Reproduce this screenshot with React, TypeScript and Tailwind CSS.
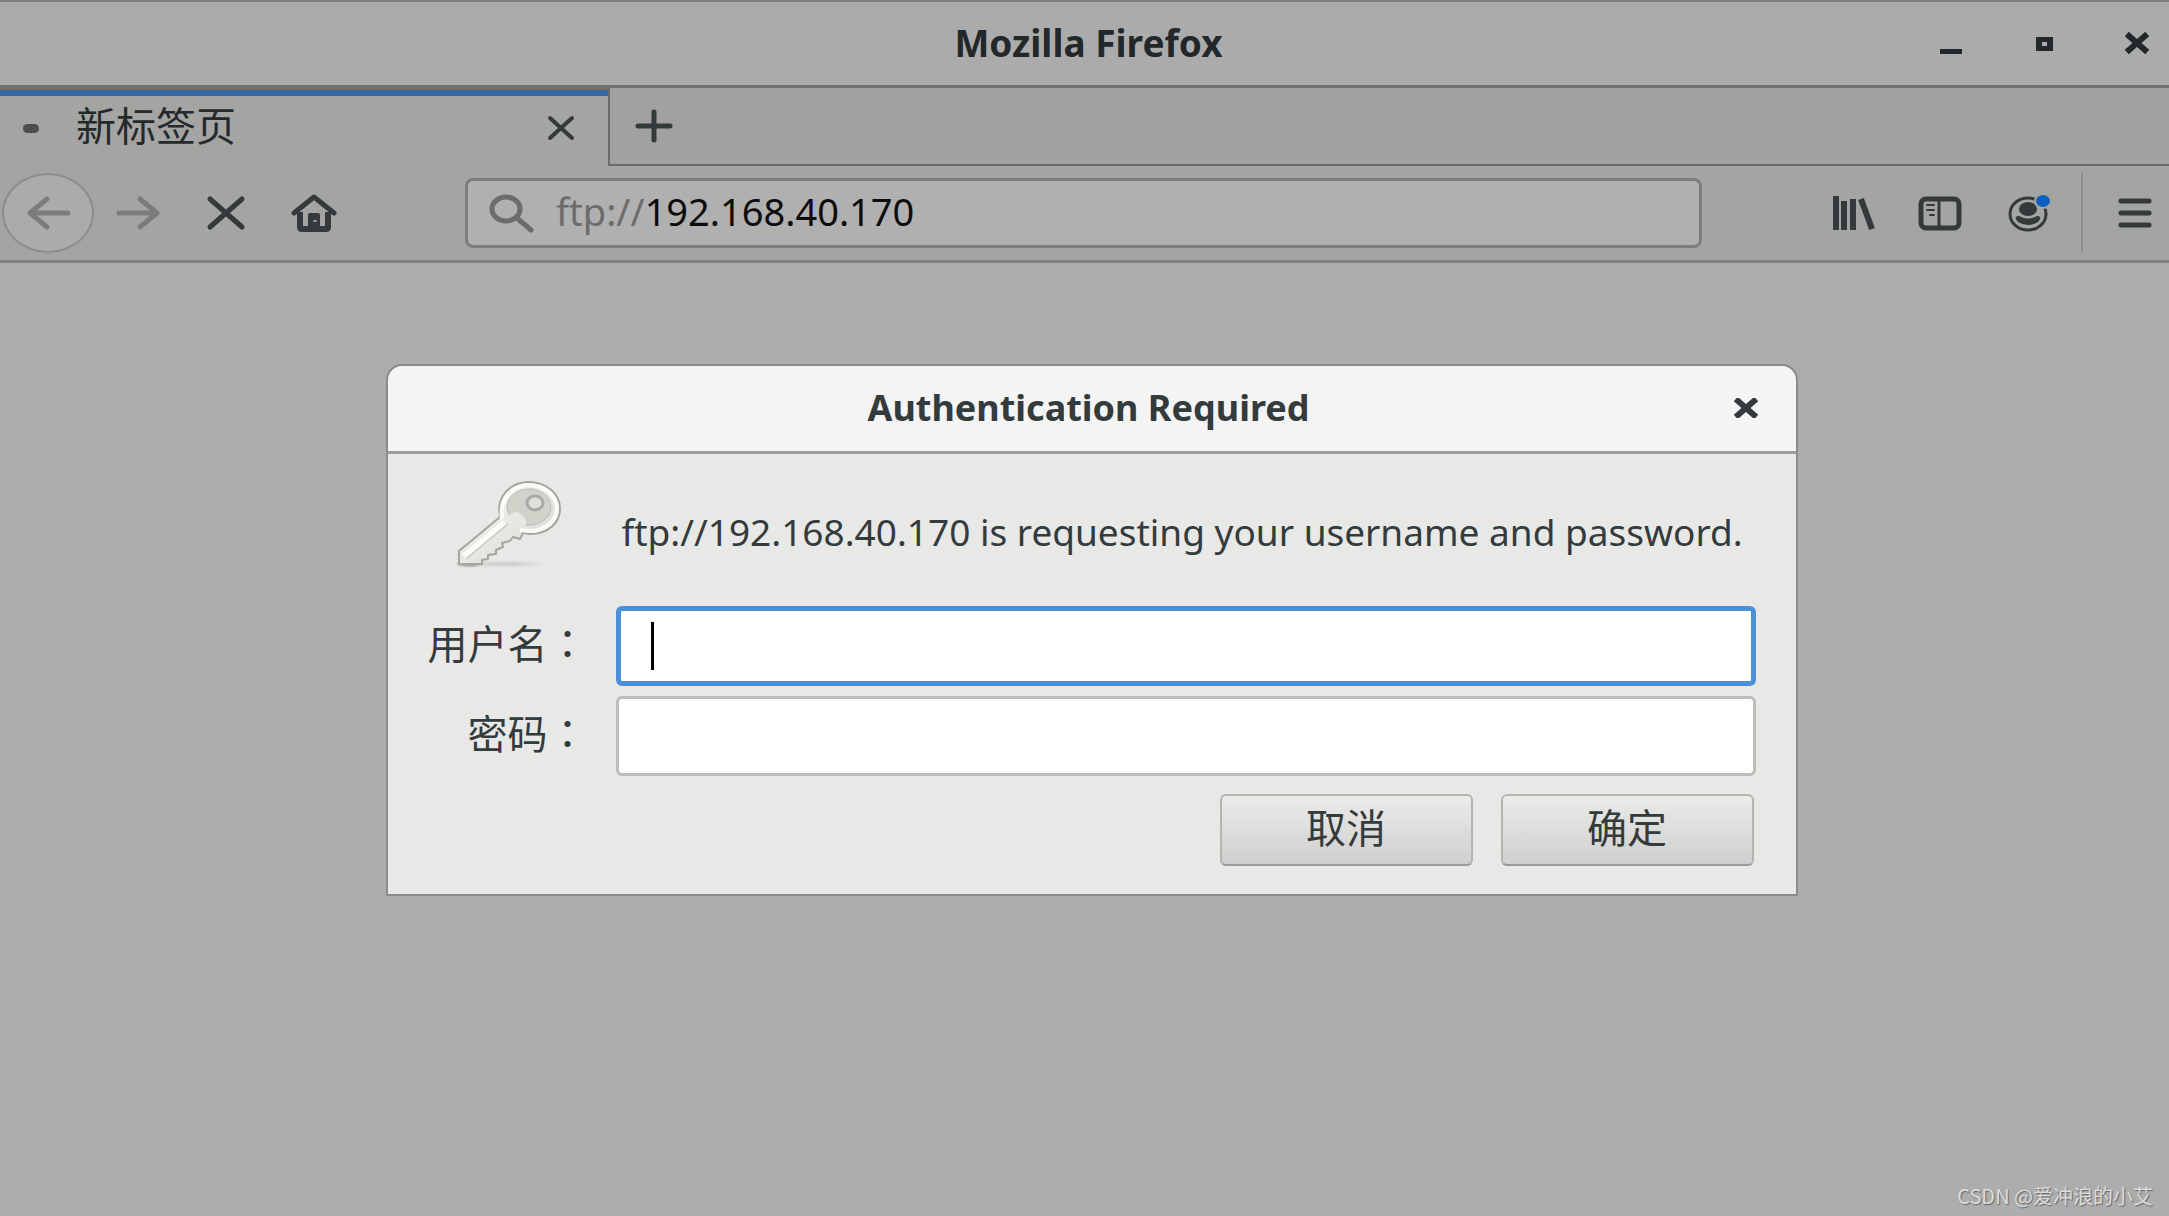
import React, { useState } from "react";

const iconColor = "#34393b";

const WindowControls: React.FC = () => (
    <div className="flex items-center gap-[29px] text-[#22282a]">
        <button type="button" aria-label="Minimize" className="flex h-16 w-16 items-center justify-center">
            <svg width="24" height="24" viewBox="0 0 24 24">
                <rect x="1" y="17" width="22" height="5" fill="currentColor" />
            </svg>
        </button>
        <button type="button" aria-label="Maximize" className="flex h-16 w-16 items-center justify-center">
            <svg width="24" height="24" viewBox="0 0 24 24">
                <path d="M4 5h17v14H4zM10 10v4h5v-4z" fill="currentColor" fillRule="evenodd" />
            </svg>
        </button>
        <button type="button" aria-label="Close" className="flex h-16 w-16 items-center justify-center">
            <svg width="24" height="24" viewBox="0 0 24 24">
                <path d="M4 4l16 14M20 4L4 18" stroke="currentColor" strokeWidth="6" strokeLinecap="square" />
            </svg>
        </button>
    </div>
);

const TabBar: React.FC = () => (
    <div className="flex h-[78px] items-stretch">
        <div className="flex w-[610px] border-t-2 border-r-2 border-t-[#70706b] border-r-[#6b6b6b]">
            <div className="flex flex-1 items-center border-t-[6px] border-[#3468a4] pr-8 pb-[6px] pl-[23px]">
                <span className="h-[9px] w-4 rounded-full bg-[#4a4e4f]" />
                <span className="ml-[37px] flex-1 pb-1 text-[40px] leading-[48px] text-[#24292b]">新标签页</span>
                <button type="button" aria-label="Close tab">
                    <svg width="30" height="26" viewBox="0 0 30 26" fill="none" stroke={iconColor} strokeWidth="4" strokeLinecap="round">
                        <path d="M4 3l22 20M26 3L4 23" />
                    </svg>
                </button>
            </div>
        </div>
        <div className="flex flex-1 items-center border-b-2 border-[#6b6b6b] bg-[#a1a1a1] pl-[25px]">
            <button type="button" aria-label="New tab">
                <svg width="38" height="34" viewBox="0 0 38 34" fill="none" stroke={iconColor} strokeWidth="5" strokeLinecap="round">
                    <path d="M3 17h32M19 3v28" />
                </svg>
            </button>
        </div>
    </div>
);

const NavButtons: React.FC = () => (
    <div className="flex items-center">
        <button type="button" aria-label="Back" className="flex h-20 w-[92px] items-center justify-center rounded-[50%] border-2 border-[#8d8d8c] bg-[#ababab]">
            <svg width="46" height="36" viewBox="0 0 46 36" fill="none" stroke="#7b7d7c" strokeWidth="5" strokeLinecap="round" strokeLinejoin="round">
                <path d="M43 18H5M22 4L5 18l17 14" />
            </svg>
        </button>
        <button type="button" aria-label="Forward" className="ml-[22px]">
            <svg width="46" height="36" viewBox="0 0 46 36" fill="none" stroke="#7b7d7c" strokeWidth="5" strokeLinecap="round" strokeLinejoin="round">
                <path d="M3 18h38M24 4l17 14-17 14" />
            </svg>
        </button>
        <button type="button" aria-label="Stop" className="ml-11">
            <svg width="40" height="36" viewBox="0 0 40 36" fill="none" stroke={iconColor} strokeWidth="5" strokeLinecap="round">
                <path d="M4 4l32 28M36 4L4 32" />
            </svg>
        </button>
        <button type="button" aria-label="Home" className="ml-[45px]">
            <svg width="46" height="40" viewBox="0 0 46 40" fill="none">
                <path d="M3 20L23 4l20 16" stroke={iconColor} strokeWidth="5" strokeLinecap="round" strokeLinejoin="round" />
                <path d="M9 19v15q0 2 2 2h24q2 0 2-2V19" stroke={iconColor} strokeWidth="6" strokeLinejoin="round" />
                <path d="M17 36V22q0-2 2-2h8q2 0 2 2v14z" fill={iconColor} />
                <ellipse cx="24" cy="28" rx="2" ry="1" fill="#a4a4a2" />
            </svg>
        </button>
    </div>
);

const UrlBar: React.FC = () => {
    const [host, setHost] = useState("192.168.40.170");

    return (
        <label className="flex h-[70px] min-w-0 flex-1 items-center rounded-lg border-[3px] border-[#7d7d7c] bg-[#b0b0b0] px-5 text-[38px] leading-[52px]">
            <svg width="48" height="40" viewBox="0 0 48 40" fill="none" stroke="#6b6c6b" strokeLinecap="round">
                <ellipse cx="18" cy="16" rx="14" ry="12" strokeWidth="5" />
                <path d="M29 25l14 12" strokeWidth="5" />
            </svg>
            <span className="ml-5 pb-1 text-[#6c6c6c]">ftp://</span>
            <input
                aria-label="Address"
                className="min-w-0 flex-1 bg-transparent pb-1 text-[#0c0c0c] outline-none"
                value={host}
                onChange={(e) => setHost(e.target.value)}
            />
        </label>
    );
};

const ToolbarActions: React.FC = () => (
    <div className="flex items-center">
        <button type="button" aria-label="Library">
            <svg width="44" height="36" viewBox="0 0 44 36" fill="none" stroke={iconColor} strokeWidth="6">
                <path d="M3 1v34M11 6v29M20 4v31M28 4l11 30" />
            </svg>
        </button>
        <button type="button" aria-label="Sidebars" className="ml-10">
            <svg width="46" height="36" viewBox="0 0 46 36" fill="none" stroke={iconColor}>
                <rect x="4" y="4" width="38" height="29" rx="5" strokeWidth="5" />
                <path d="M22 4v28" strokeWidth="3" />
                <path d="M10 10h7M10 15h7M13 20h4" strokeWidth="2" strokeLinecap="round" />
            </svg>
        </button>
        <button type="button" aria-label="Account" className="ml-[45px]">
            <svg width="44" height="40" viewBox="0 0 44 40">
                <ellipse cx="20" cy="21" rx="18" ry="16" fill="none" stroke={iconColor} strokeWidth="3" />
                <ellipse cx="20" cy="16" rx="9" ry="7" fill={iconColor} />
                <path d="M8 24q2-2 5 0 7 3 14 0 3-2 5 0 1 2-2 5-10 6-20 0-3-3-2-5z" fill={iconColor} />
                <ellipse cx="35" cy="8" rx="9" ry="8" fill="#a4a4a2" />
                <ellipse cx="35" cy="8" rx="7" ry="6" fill="#0d5fbd" />
            </svg>
        </button>
        <span className="ml-[29px] h-20 w-[2px] bg-[#8f8f8e]" />
        <button type="button" aria-label="Open menu" className="ml-[35px]">
            <svg width="34" height="30" viewBox="0 0 34 30" fill="none" stroke={iconColor} strokeWidth="5" strokeLinecap="round">
                <path d="M3 3h28M3 15h28M3 27h28" />
            </svg>
        </button>
    </div>
);

const KeyIcon: React.FC = () => (
    <svg width="110" height="90" viewBox="0 0 110 90" aria-hidden="true">
        <defs>
            <linearGradient id="metal" x1="0" y1="0" x2="1" y2="1">
                <stop offset="0" stopColor="#fbfbfa" />
                <stop offset="1" stopColor="#d3d6cd" />
            </linearGradient>
            <radialGradient id="shade">
                <stop offset="0" stopColor="#555" stopOpacity="0.7" />
                <stop offset="1" stopColor="#555" stopOpacity="0" />
            </radialGradient>
        </defs>
        <ellipse cx="50" cy="84" rx="46" ry="4" fill="url(#shade)" opacity="0.3" />
        <ellipse cx="15" cy="84" rx="15" ry="4" fill="url(#shade)" />
        <path
            d="M46 37C42 18 54 3 74 2c18 0 32 11 32 27 0 14-12 25-30 25l-7-1-3 6-7-2-3 4-8 2 1 4-7 3 0 4-8 1 0 4-6 1v4H5V71z"
            fill="url(#metal)"
            stroke="#a3a5a0"
            strokeWidth="2"
            strokeLinejoin="round"
        />
        <path d="M48 39C45 19 58 6 74 5c17 0 28 10 29 23 0 13-12 23-27 23l-10-1" fill="none" stroke="#fbfcfa" strokeWidth="4" />
        <ellipse cx="75" cy="27" rx="22" ry="18" fill="#d0d3ca" stroke="#b8bab4" strokeWidth="1" />
        <path d="M55 35q7-7 15 2 4 5 1 9-12-2-16-11z" fill="#e6e8e2" />
        <ellipse cx="81" cy="23" rx="8" ry="7" fill="#dfe0dc" stroke="#a9aaa7" strokeWidth="3" />
        <path d="M51 43L10 77" stroke="#fbfcfa" strokeWidth="7" />
        <path d="M54 44L12 79" stroke="#cdd1c5" strokeWidth="2" />
    </svg>
);

const AuthDialog: React.FC = () => {
    const [username, setUsername] = useState("");
    const [password, setPassword] = useState("");

    const labelClass = "pb-[6px] text-right text-[40px] leading-[48px] whitespace-nowrap";
    const buttonClass =
        "h-[72px] w-[253px] rounded-md border-2 border-[#b4b4b1] border-b-[#999997] bg-linear-to-b from-[#ebebea] to-[#cfcfce] pb-1 text-[40px] leading-[48px]";

    return (
        <div
            role="dialog"
            aria-labelledby="auth-title"
            className="w-[1412px] max-w-full rounded-t-2xl border-2 border-[#8a8a89] bg-[#e8e8e6] text-[#343b3d]"
        >
            <header className="flex h-[88px] items-center rounded-t-2xl border-b-[3px] border-[#9c9c99] bg-[#f4f4f4] pr-[38px] pb-[2px] pl-[56px]">
                <h1 id="auth-title" className="flex-1 text-center text-[36px] leading-[48px] font-bold">
                    Authentication Required
                </h1>
                <button type="button" aria-label="Close dialog">
                    <svg width="24" height="20" viewBox="0 0 24 20">
                        <path d="M4 3l16 14M20 3L4 17" stroke="currentColor" strokeWidth="6" strokeLinecap="square" />
                    </svg>
                </button>
            </header>
            <form className="px-10 pb-7" onSubmit={(e) => e.preventDefault()}>
                <div className="grid grid-cols-[160px_1fr] items-center gap-x-7 gap-y-[10px]">
                    <div className="flex h-[142px] items-center justify-end pr-6">
                        <KeyIcon />
                    </div>
                    <p className="pt-[14px] pl-[6px] text-[37px] leading-[52px]">
                        ftp://192.168.40.170 is requesting your username and password.
                    </p>

                    <label htmlFor="username" className={labelClass}>
                        用户名<span className="font-['Noto_Sans_CJK_TC',sans-serif]">：</span>
                    </label>
                    <div className="relative">
                        <input
                            id="username"
                            className="block h-20 w-full rounded-md border-[5px] border-[#4a90d9] bg-white px-7 text-[38px] outline-none"
                            value={username}
                            onChange={(e) => setUsername(e.target.value)}
                        />
                        <span className="absolute top-4 left-[35px] h-12 w-[3px] bg-black" />
                    </div>

                    <label htmlFor="password" className={labelClass}>
                        密码<span className="font-['Noto_Sans_CJK_TC',sans-serif]">：</span>
                    </label>
                    <input
                        id="password"
                        type="password"
                        className="block h-20 w-full rounded-md border-[3px] border-[#bcbcb9] bg-white px-7 text-[38px] outline-none"
                        value={password}
                        onChange={(e) => setPassword(e.target.value)}
                    />
                </div>
                <div className="mt-[18px] flex justify-end gap-7 pr-[2px]">
                    <button type="button" className={buttonClass}>取消</button>
                    <button type="submit" className={buttonClass}>确定</button>
                </div>
            </form>
        </div>
    );
};

const App: React.FC = () => {
    return (
        <div className="flex min-h-screen flex-col bg-[#adadad] font-['Noto_Sans','Noto_Sans_CJK_SC',sans-serif]">
            <header className="grid h-[88px] grid-cols-[1fr_auto_1fr] items-center border-t-2 border-b-[3px] border-t-[#7e7e7e] border-b-[#70706b] bg-[#ababab]">
                <span />
                <div className="pb-[2px] pl-2 text-[37px] leading-[48px] font-bold text-[#22282a]">Mozilla Firefox</div>
                <div className="flex justify-end">
                    <WindowControls />
                </div>
            </header>
            <div className="border-b-[3px] border-[#80807f] bg-[#a4a4a2]">
                <TabBar />
                <div className="flex h-[94px] items-center pr-[17px] pl-[2px]">
                    <NavButtons />
                    <div className="flex min-w-0 flex-1 pr-[131px] pl-[128px]">
                        <UrlBar />
                    </div>
                    <ToolbarActions />
                </div>
            </div>
            <main className="flex flex-1 flex-col items-center pt-[101px] pl-[14px]">
                <AuthDialog />
            </main>
            <footer className="self-end pr-4 pb-[6px] font-['Noto_Sans_CJK_SC',sans-serif] text-[20px] leading-[28px] text-[#dcdcdc] [text-shadow:1px_1px_1px_#666]">
                CSDN @爱冲浪的小艾
            </footer>
        </div>
    );
};

export default App;
